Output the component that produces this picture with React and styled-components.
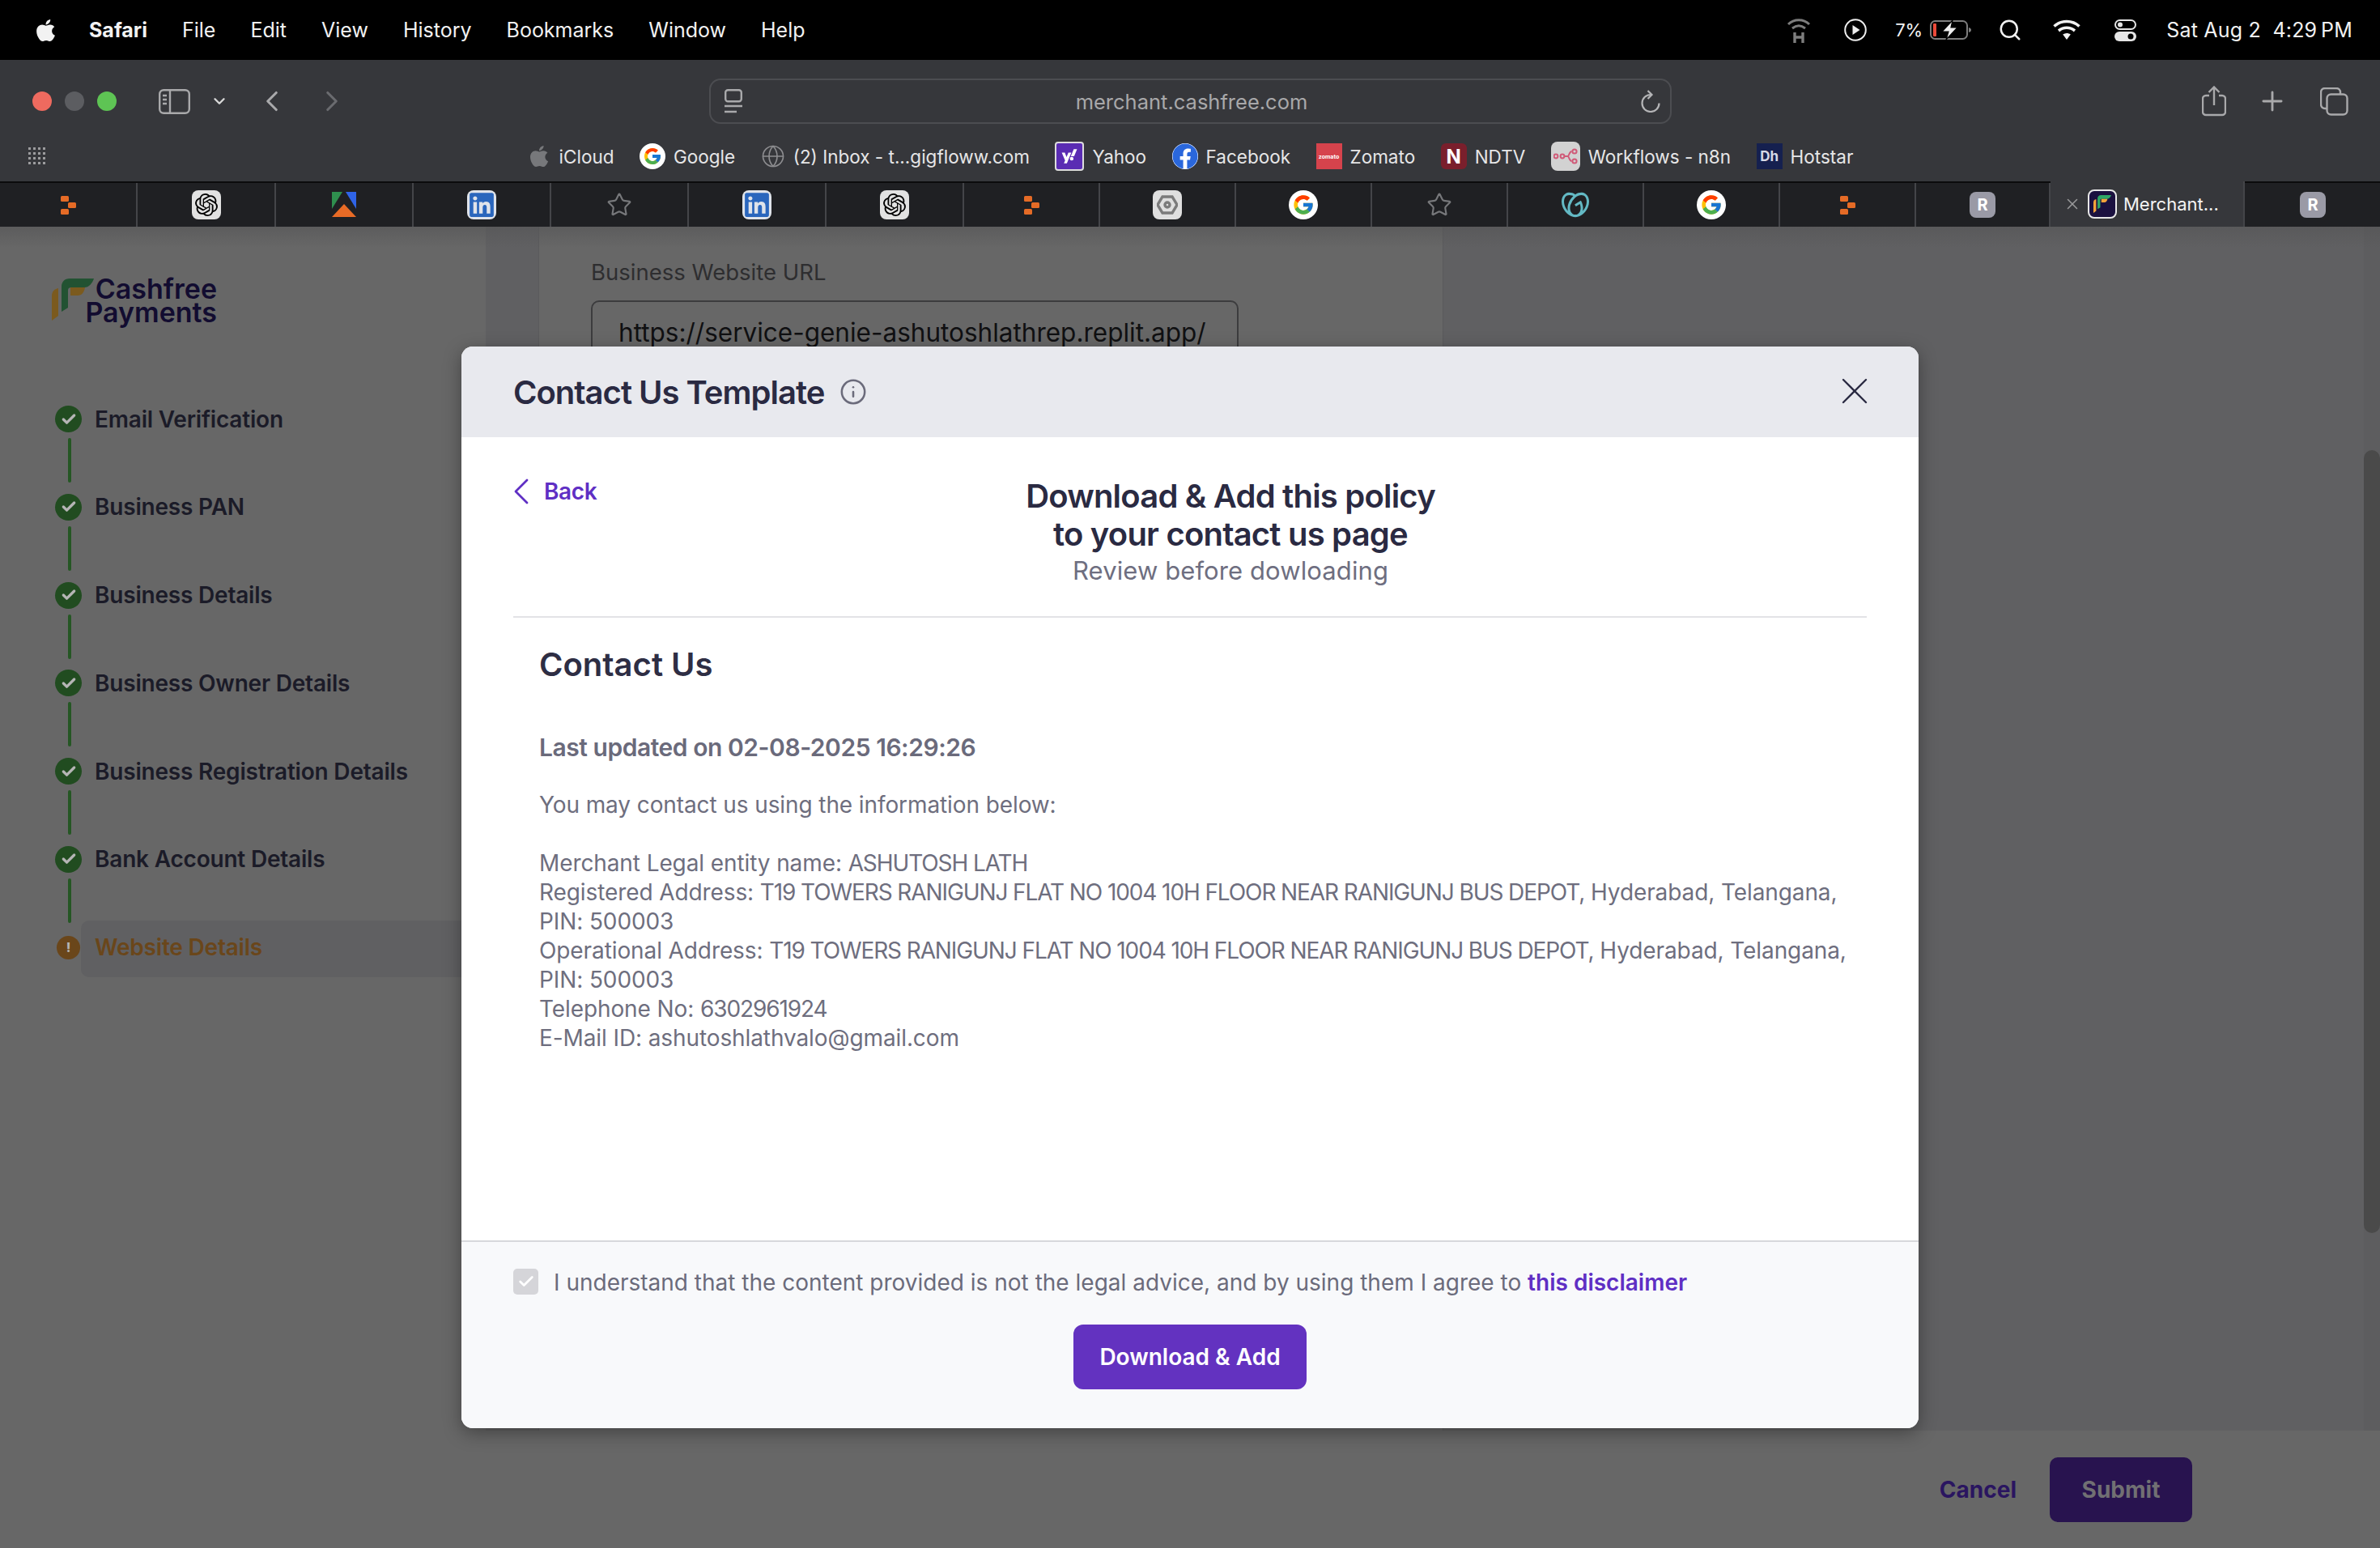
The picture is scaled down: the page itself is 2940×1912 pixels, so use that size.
import React from "react";
import styled, { createGlobalStyle } from "styled-components";
import { FaApple, FaYahoo, FaFacebook, FaLinkedin } from "react-icons/fa";
import { FcGoogle } from "react-icons/fc";
import { SiOpenai, SiGodaddy } from "react-icons/si";
import { Star, Globe, Search, Plus, ChevronLeft, ChevronRight, ChevronDown, X, Info, Check } from "lucide-react";

const UI = `"Inter", "Liberation Sans", sans-serif`;

const GlobalStyle = createGlobalStyle`
  html, body { margin: 0; padding: 0; background: #666; }
  * { box-sizing: border-box; }
`;

const Screen = styled.div`
  position: relative;
  display: flex;
  flex-direction: column;
  width: 2940px;
  height: 1912px;
  overflow: hidden;
  font-family: ${UI};
`;

/* mac menu bar */
const MenuBar = styled.div`
  display: flex;
  align-items: center;
  height: 74px;
  flex: none;
  padding: 0 34px 0 41px;
  background: #000;
  color: #f2f2f2;
  font-size: 25px;
`;
const MenuItem = styled.span`
  margin-left: ${(p) => p.$gap || 43}px;
  font-weight: ${(p) => (p.$bold ? 700 : 400)};
`;
const StatusArea = styled.div`
  display: flex;
  align-items: center;
  margin-left: auto;
`;
const StatusSlot = styled.span`
  display: flex;
  align-items: center;
  margin-left: ${(p) => p.$gap}px;
  font-size: ${(p) => p.$size || 25}px;
  letter-spacing: ${(p) => p.$track || 0}px;
  white-space: pre;
`;

/* safari toolbar */
const Toolbar = styled.div`
  flex: none;
  height: 150px;
  background: #36373b;
  color: #a9a9ab;
`;
const ToolRow = styled.div`
  display: flex;
  align-items: center;
  height: 102px;
  padding: 0 39px 0 40px;
`;
const Light = styled.span`
  width: 24px;
  height: 24px;
  margin-right: 16px;
  border-radius: 50%;
  background: ${(p) => p.$color};
`;
const ToolIcon = styled.span`
  display: flex;
  align-items: center;
  margin-left: ${(p) => p.$gap}px;
  color: ${(p) => p.$color || "#a9a9ab"};
`;
const AddressBar = styled.div`
  display: flex;
  align-items: center;
  justify-content: space-between;
  width: 1189px;
  height: 56px;
  margin-left: 445px;
  padding: 0 12px 0 17px;
  border: 2px solid #4c4d51;
  border-radius: 14px;
`;
const AddressText = styled.span`
  font-size: 25.5px;
  color: #a8a8aa;
`;
const RightTools = styled.div`
  display: flex;
  align-items: center;
  margin-left: auto;
`;
const Bookmarks = styled.div`
  position: relative;
  display: flex;
  align-items: center;
  justify-content: center;
  gap: 31.5px;
  height: 48px;
  margin-top: -7px;
`;
const GridIcon = styled.span`
  position: absolute;
  left: 35px;
  top: 13px;
  display: grid;
  grid-template-columns: repeat(4, 3px);
  grid-auto-rows: 3px;
  gap: 3px;
  i { display: block; background: #9c9c9e; }
`;
const Bookmark = styled.div`
  display: flex;
  align-items: center;
  gap: 10px;
  font-size: 22.5px;
  color: #e6e6e7;
`;
const Tile = styled.span`
  display: flex;
  align-items: center;
  justify-content: center;
  flex: none;
  width: ${(p) => p.$size || 36}px;
  height: ${(p) => p.$size || 36}px;
  border-radius: ${(p) => (p.$round ? "50%" : `${p.$radius ?? 8}px`)};
  border: ${(p) => p.$border || "none"};
  background: ${(p) => p.$bg || "transparent"};
  color: ${(p) => p.$color || "#000"};
  font-weight: 700;
  font-size: ${(p) => p.$font || 20}px;
`;
const FacebookGlyph = styled(FaFacebook)`
  border-radius: 50%;
  background: #fff;
`;

/* tabs */
const TabStrip = styled.div`
  display: flex;
  flex: none;
  height: 56px;
  background: #1f2023;
  border-top: 2px solid #0b0b0c;
`;
const Tab = styled.div`
  display: flex;
  align-items: center;
  justify-content: center;
  flex: none;
  width: ${(p) => p.$w}px;
  border-right: ${(p) => (p.$last ? "none" : "2px solid #444549")};
`;
const ActiveTab = styled.div`
  display: flex;
  align-items: center;
  flex: none;
  gap: 8px;
  width: 240px;
  margin-top: -2px;
  padding-left: 16px;
  background: #36373b;
  border-right: 2px solid #444549;
  font-size: 22px;
  color: #f4f4f4;
`;

/* page behind the modal */
const Page = styled.div`
  position: relative;
  display: flex;
  flex: 1;
  min-height: 0;
  background: #676767;
  &::before {
    content: "";
    position: absolute;
    inset: 0 0 auto 0;
    height: 26px;
    background: linear-gradient(#55555699, #67676700);
    z-index: 2;
  }
`;
const Sidebar = styled.aside`
  flex: none;
  width: 600px;
  padding: 64px 0 0 64px;
  background: #676767;
`;
const Logo = styled.div`
  display: flex;
  align-items: flex-start;
  height: 62px;
  margin-bottom: 95px;
`;
const LogoText = styled.div`
  width: 164px;
  margin: -2px 0 0 -12px;
  text-align: right;
  font-size: 34px;
  font-weight: 600;
  line-height: 29px;
  color: #120c30;
`;
const Steps = styled.div`
  display: flex;
  flex-direction: column;
  margin-left: 4px;
`;
const Step = styled.div`
  position: relative;
  display: flex;
  align-items: center;
  gap: 16px;
  height: 33px;
  margin-bottom: ${(p) => (p.$last ? 0 : 75.8)}px;
  font-size: 28px;
  font-weight: 600;
  letter-spacing: -0.2px;
  color: ${(p) => (p.$warn ? "#6a461a" : "#1b1b28")};
  &::after {
    content: ${(p) => (p.$last ? "none" : '""')};
    position: absolute;
    left: 16px;
    top: 40px;
    width: 4px;
    height: 55px;
    border-radius: 2px;
    background: #255724;
  }
`;
const StepHighlight = styled.div`
  position: absolute;
  left: 32px;
  top: -17px;
  width: 520px;
  height: 70px;
  border-radius: 10px 0 0 10px;
  background: #606062;
`;
const StepDot = styled.span`
  position: relative;
  display: flex;
  align-items: center;
  justify-content: center;
  flex: none;
  width: 33px;
  height: 33px;
  border-radius: 50%;
  background: ${(p) => (p.$warn ? "#6a461a" : "#214c20")};
  color: #b5b5b5;
  font-size: 18px;
  font-weight: 800;
  transform: scale(${(p) => (p.$warn ? 0.88 : 1)});
`;
const StepLabel = styled.span`
  position: relative;
`;
const RightColumn = styled.div`
  display: flex;
  flex-direction: column;
  flex: 1;
  min-width: 0;
`;
const ScrollRow = styled.div`
  display: flex;
  flex: 1;
  min-height: 0;
  background: #606062;
`;
const MainArea = styled.div`
  flex: 1;
  padding-left: 65px;
`;
const FormCard = styled.div`
  width: 1118px;
  height: 100%;
  padding: 40px 64px;
  background: #676767;
  border-left: 1px solid #5a5a5c;
  border-right: 1px solid #5a5a5c;
`;
const FieldLabel = styled.div`
  margin-bottom: 19px;
  font-size: 27.5px;
  line-height: 32px;
  color: #2e2e30;
`;
const FieldBox = styled.div`
  width: 800px;
  height: 90px;
  padding: 18px 32px;
  border: 2px solid #3c3c3e;
  border-radius: 10px;
  font-size: 31.5px;
  color: #101012;
  white-space: nowrap;
`;
const ScrollTrack = styled.div`
  flex: none;
  width: 20px;
  padding-top: 276px;
  background: #5d5d5f;
`;
const ScrollThumb = styled.div`
  height: 967px;
  border-radius: 10px;
  background: #4a4a4a;
`;
const BottomBar = styled.div`
  display: flex;
  align-items: flex-start;
  justify-content: flex-end;
  flex: none;
  gap: 41px;
  height: 145px;
  padding: 33px 232px 0 0;
  background: #676767;
`;
const CancelLink = styled.span`
  line-height: 80px;
  font-size: 28px;
  font-weight: 700;
  color: #2a1560;
`;
const SubmitButton = styled.span`
  width: 176px;
  height: 80px;
  border-radius: 10px;
  background: #28134f;
  text-align: center;
  line-height: 80px;
  font-size: 28px;
  font-weight: 700;
  color: #717073;
`;

/* modal */
const Modal = styled.div`
  position: absolute;
  left: 570px;
  top: 428px;
  display: flex;
  flex-direction: column;
  width: 1800px;
  height: 1336px;
  overflow: hidden;
  border-radius: 14px;
  background: #fff;
  box-shadow: 0 6px 22px rgba(0, 0, 0, 0.35);
  z-index: 5;
`;
const ModalHeader = styled.div`
  display: flex;
  align-items: center;
  flex: none;
  height: 112px;
  padding: 0 60px 0 64px;
  background: #e8e9ee;
`;
const ModalTitle = styled.h2`
  margin: 0 19px 0 0;
  font-size: 40px;
  font-weight: 600;
  letter-spacing: -1px;
  color: #2a2a42;
`;
const CloseIcon = styled(X)`
  margin: -2px -9px 0 auto;
`;
const ModalBody = styled.div`
  position: relative;
  flex: 1;
  padding: 0 64px;
`;
const BackLink = styled.div`
  position: absolute;
  left: 46px;
  top: 39px;
  display: flex;
  align-items: center;
  gap: 0;
  font-size: 28px;
  font-weight: 600;
  letter-spacing: -0.4px;
  color: #5f2fc4;
`;
const PolicyHead = styled.div`
  height: 223px;
  padding: 49px 0 0 100px;
  border-bottom: 2px solid #e3e3e6;
  text-align: center;
  color: #2a2a42;
`;
const PolicyTitle = styled.div`
  font-size: 40px;
  font-weight: 600;
  line-height: 47px;
  letter-spacing: -0.8px;
`;
const PolicySub = styled.div`
  font-size: 31px;
  line-height: 43px;
  letter-spacing: 0.1px;
  color: #6e6e80;
`;
const Policy = styled.div`
  padding: 34px 32px 0;
  color: #6e6e7e;
`;
const PolicyName = styled.h3`
  margin: 0 0 59px;
  font-size: 40px;
  line-height: 48px;
  font-weight: 600;
  color: #2e2e44;
`;
const PolicyUpdated = styled.div`
  margin-bottom: 34px;
  font-size: 30px;
  line-height: 38px;
  font-weight: 600;
  letter-spacing: -0.46px;
  color: #6a6a7b;
`;
const PolicyText = styled.div`
  font-size: 28px;
  line-height: 36px;
  letter-spacing: -0.1px;
  white-space: nowrap;
`;
const PolicyGap = styled.div`
  height: 36px;
`;
const Caps = styled.span`
  letter-spacing: -1.1px;
`;
const ModalFooter = styled.div`
  display: flex;
  flex-direction: column;
  align-items: center;
  flex: none;
  height: 232px;
  padding: 33px 64px 0;
  background: #f8f9fb;
  border-top: 2px solid #d7d8dc;
`;
const ConsentRow = styled.div`
  display: flex;
  align-items: center;
  align-self: stretch;
  gap: 19px;
  height: 32px;
  font-size: 28px;
  color: #6b6b7b;
`;
const ConsentBox = styled.span`
  display: flex;
  align-items: center;
  justify-content: center;
  width: 31px;
  height: 32px;
  border-radius: 5px;
  background: #d5d5d9;
  color: #fff;
`;
const ConsentText = styled.span`
  position: relative;
  top: 1px;
`;
const DisclaimerLink = styled.span`
  font-weight: 600;
  color: #5f2fc4;
`;
const PrimaryButton = styled.div`
  width: 288px;
  height: 80px;
  margin-top: 37px;
  border-radius: 12px;
  background: #6332c0;
  text-align: center;
  line-height: 80px;
  font-size: 28px;
  font-weight: 600;
  color: #fff;
`;

const OrangeMark = () => (
  <svg width="19" height="23" viewBox="0 0 19 23" fill="#e56b26">
    <rect x="0" y="0" width="10" height="7" rx="1.5" />
    <rect x="9" y="8" width="10" height="7" rx="1.5" />
    <rect x="0" y="16" width="10" height="7" rx="1.5" />
  </svg>
);

const ArrowMark = () => (
  <svg width="32" height="32" viewBox="0 0 32 32">
    <path d="M1 0h13L1 21z" fill="#2f8f4e" />
    <path d="M18 0h13v21z" fill="#2f64e8" />
    <path d="M16 15l15 16H1z" fill="#e86b26" />
  </svg>
);

const HexMark = () => (
  <svg width="26" height="24" viewBox="0 0 26 24" fill="none" stroke="#7b7b7b" strokeWidth="3.4">
    <path d="M7 2h12l6 10-6 10H7L1 12z" />
    <circle cx="13" cy="12" r="3" />
  </svg>
);

const N8nMark = () => (
  <svg width="30" height="20" viewBox="0 0 30 20" fill="none" stroke="#d05a78" strokeWidth="2">
    <circle cx="3" cy="10" r="2.4" />
    <circle cx="11" cy="10" r="2.4" />
    <path d="M13.5 10h4c2 0 2-6 5-6M17.5 10c2 0 2 6 5 6" />
    <circle cx="26" cy="4" r="2.6" />
    <circle cx="26" cy="16" r="2.6" />
  </svg>
);

const CashfreeMark = ({ size = 52, dim }) => (
  <svg width={size} height={size} viewBox="0 0 52 52">
    <path d="M12 10C12 4 16 0 22 0H52C50 6 46 11 40 11H24C22 11 20 12 20 14V36L12 41z" fill={dim ? "#225232" : "#2fa866"} />
    <path d="M23 11H41C40 17 37 21 32 21H23z" fill={dim ? "#7b5a1e" : "#f3a33a"} />
    <path d="M0 22C0 16 3 13 8 12V46L0 52z" fill={dim ? "#7b5a1e" : "#f3a33a"} />
  </svg>
);

const HotspotIcon = () => (
  <svg width="30" height="32" viewBox="0 0 30 32" fill="none" stroke="#7d7d7d" strokeWidth="3">
    <path d="M2 9C9 2 21 2 28 9M7 14c5-4 11-4 16 0" />
    <path d="M10 19v13M20 19v13M10 25h10" strokeWidth="3.4" />
  </svg>
);

const PlayIcon = () => (
  <svg width="28" height="28" viewBox="0 0 28 28">
    <circle cx="14" cy="14" r="12.8" fill="none" stroke="#eee" strokeWidth="2" />
    <path d="M10.5 8l9 6-9 6z" fill="#eee" />
  </svg>
);

const BatteryIcon = () => (
  <svg width="52" height="24" viewBox="0 0 52 24">
    <rect x="1" y="1" width="45" height="22" rx="5.5" fill="none" stroke="#7d7d7d" strokeWidth="2" />
    <rect x="4" y="4" width="4" height="16" rx="1" fill="#eb4a3a" />
    <path d="M48 9c2 .5 3 1.5 3 3s-1 2.5-3 3z" fill="#7d7d7d" />
    <path d="M28 0L15 14h8l-3 10 14-15h-8z" fill="#eee" stroke="#000" strokeWidth="1.2" />
  </svg>
);

const WifiIcon = () => (
  <svg width="34" height="26" viewBox="0 0 34 26" fill="none" stroke="#f2f2f2" strokeWidth="3.6">
    <path d="M1.5 8.5C10 .5 24 .5 32.5 8.5M7 14c6-5 14-5 20 0" />
    <path d="M12.2 18.5c3-2 6.6-2 9.6 0L17 25z" fill="#f2f2f2" stroke="none" />
  </svg>
);

const ControlIcon = () => (
  <svg width="27" height="27" viewBox="0 0 27 27">
    <rect x="1" y="1" width="25" height="11" rx="5.5" fill="none" stroke="#e6e6e6" strokeWidth="2" />
    <circle cx="7" cy="6.5" r="3" fill="#e6e6e6" />
    <rect y="15" width="27" height="12" rx="6" fill="#e6e6e6" />
    <circle cx="20" cy="21" r="3.5" fill="#000" />
  </svg>
);

const SidebarIcon = () => (
  <svg width="39" height="31" viewBox="0 0 39 31" fill="none" stroke="#a9a9ab" strokeWidth="2.4">
    <rect x="1.2" y="1.2" width="36.6" height="28.6" rx="5" />
    <path d="M14 1.5v28" />
    <path d="M5 8h5M5 13h5M5 18h5" />
  </svg>
);

const ReaderIcon = () => (
  <svg width="22" height="30" viewBox="0 0 22 30" fill="none" stroke="#a9a9ab" strokeWidth="2.4">
    <rect x="1.2" y="1.2" width="19.6" height="14" rx="3" />
    <path d="M0 21h22M0 28h15" />
  </svg>
);

const ReloadIcon = () => (
  <svg width="24" height="28" viewBox="0 0 24 28" fill="none" stroke="#b5b5b7" strokeWidth="2.2">
    <path d="M12 6A10.5 10.5 0 1 0 22.5 16.5" />
    <path d="M8.5 1L13.5 6 8.5 11" />
  </svg>
);

const ShareIcon = () => (
  <svg width="30" height="38" viewBox="0 0 30 38" fill="none" stroke="#a9a9ab" strokeWidth="2.4">
    <path d="M9 12H5a4 4 0 0 0-4 4v16a4 4 0 0 0 4 4h20a4 4 0 0 0 4-4V16a4 4 0 0 0-4-4h-4" />
    <path d="M15 24V2M8.5 8L15 1.5 21.5 8" />
  </svg>
);

const TabsIcon = () => (
  <svg width="35" height="35" viewBox="0 0 35 35" fill="none" stroke="#a9a9ab" strokeWidth="2.4">
    <path d="M8 26H6a5 5 0 0 1-5-5V6a5 5 0 0 1 5-5h14a5 5 0 0 1 5 5v2" />
    <rect x="8.5" y="8.5" width="25" height="25" rx="5" />
  </svg>
);

const GoogleTile = ({ size = 36 }) => (
  <Tile $size={size} $round $bg="#fff">
    <FcGoogle size={size - 8} />
  </Tile>
);

const GptTile = () => (
  <Tile $bg="#e2e2e2">
    <SiOpenai size={28} />
  </Tile>
);

const LinkedinTile = () => (
  <Tile $bg="#dfe3ea">
    <FaLinkedin size={34} color="#2a66bd" />
  </Tile>
);

const StarIcon = () => <Star size={32} color="#77787b" strokeWidth={1.6} />;

const tabs = [
  { w: 170, icon: <OrangeMark /> },
  { w: 171, icon: <GptTile /> },
  { w: 170, icon: <ArrowMark /> },
  { w: 170, icon: <LinkedinTile /> },
  { w: 170, icon: <StarIcon /> },
  { w: 170, icon: <LinkedinTile /> },
  { w: 170, icon: <GptTile /> },
  { w: 168, icon: <OrangeMark /> },
  { w: 168, icon: <Tile $bg="#dfdfdf"><HexMark /></Tile> },
  { w: 168, icon: <GoogleTile /> },
  { w: 168, icon: <StarIcon /> },
  { w: 168, icon: <SiGodaddy size={34} color="#63b9c4" /> },
  { w: 168, icon: <GoogleTile /> },
  { w: 168, icon: <OrangeMark /> },
  { w: 166, icon: <Tile $size={32} $bg="#9a9aa6" $color="#fff">R</Tile> },
];

const bookmarks = [
  { label: "iCloud", icon: <FaApple size={30} color="#77787b" /> },
  { label: "Google", icon: <GoogleTile size={32} /> },
  { label: "(2) Inbox - t...gigfloww.com", icon: <Globe size={30} color="#8d8d90" strokeWidth={1.3} /> },
  { label: "Yahoo", icon: <Tile $size={36} $bg="#5a2cb3" $color="#fff" $radius={4} $border="2px solid #ddd"><FaYahoo size={20} /></Tile> },
  { label: "Facebook", icon: <Tile $size={32} $round $bg="#2a67dc"><FacebookGlyph size={32} color="#2a67dc" /></Tile> },
  { label: "Zomato", icon: <Tile $size={32} $radius={0} $bg="#d6434c" $color="#fff" $font={7}>zomato</Tile> },
  { label: "NDTV", icon: <Tile $size={32} $radius={6} $bg="#7a1f2c" $color="#fff" $font={24}>N</Tile> },
  { label: "Workflows - n8n", icon: <Tile $bg="#d2d2d2"><N8nMark /></Tile> },
  { label: "Hotstar", icon: <Tile $size={32} $radius={0} $bg="#15204f" $color="#d6d9e6" $font={17}>Dh</Tile> },
];

const steps = [
  "Email Verification",
  "Business PAN",
  "Business Details",
  "Business Owner Details",
  "Business Registration Details",
  "Bank Account Details",
];

const ADDRESS = "T19 TOWERS RANIGUNJ FLAT NO 1004 10H FLOOR NEAR RANIGUNJ BUS DEPOT,";

const App = () => (
  <Screen>
    <GlobalStyle />
    <MenuBar>
      <FaApple size={31} />
      <MenuItem $gap={38} $bold>Safari</MenuItem>
      <MenuItem>File</MenuItem>
      <MenuItem>Edit</MenuItem>
      <MenuItem>View</MenuItem>
      <MenuItem>History</MenuItem>
      <MenuItem>Bookmarks</MenuItem>
      <MenuItem>Window</MenuItem>
      <MenuItem>Help</MenuItem>
      <StatusArea>
        <HotspotIcon />
        <StatusSlot $gap={41}><PlayIcon /></StatusSlot>
        <StatusSlot $gap={35} $size={22}>7%</StatusSlot>
        <StatusSlot $gap={9}><BatteryIcon /></StatusSlot>
        <StatusSlot $gap={32}><Search size={30} strokeWidth={2} /></StatusSlot>
        <StatusSlot $gap={38}><WifiIcon /></StatusSlot>
        <StatusSlot $gap={42}><ControlIcon /></StatusSlot>
        <StatusSlot $gap={37} $track={0.2}>{"Sat Aug 2  4:29\u2009PM"}</StatusSlot>
      </StatusArea>
    </MenuBar>

    <Toolbar>
      <ToolRow>
        <Light $color="#ee6a5f" />
        <Light $color="#5c5d61" />
        <Light $color="#5ec454" />
        <ToolIcon $gap={36}><SidebarIcon /></ToolIcon>
        <ToolIcon $gap={25}><ChevronDown size={22} strokeWidth={2.6} color="#d8d8d8" /></ToolIcon>
        <ToolIcon $gap={33}><ChevronLeft size={42} strokeWidth={1.8} /></ToolIcon>
        <ToolIcon $gap={32} $color="#6a6b6f"><ChevronRight size={42} strokeWidth={1.8} /></ToolIcon>
        <AddressBar>
          <ReaderIcon />
          <AddressText>merchant.cashfree.com</AddressText>
          <ReloadIcon />
        </AddressBar>
        <RightTools>
          <ShareIcon />
          <ToolIcon $gap={38}><Plus size={38} strokeWidth={1.8} /></ToolIcon>
          <ToolIcon $gap={40}><TabsIcon /></ToolIcon>
        </RightTools>
      </ToolRow>
      <Bookmarks>
        <GridIcon>{Array.from({ length: 16 }, (_, i) => <i key={i} />)}</GridIcon>
        {bookmarks.map((b) => (
          <Bookmark key={b.label}>{b.icon}<span>{b.label}</span></Bookmark>
        ))}
      </Bookmarks>
    </Toolbar>

    <TabStrip>
      {tabs.map((t, i) => (
        <Tab key={i} $w={t.w}>{t.icon}</Tab>
      ))}
      <ActiveTab>
        <X size={22} color="#9a9a9c" strokeWidth={1.6} />
        <Tile $bg="#1b1140" $border="2px solid #e8e8e8"><CashfreeMark size={22} /></Tile>
        <span>Merchant...</span>
      </ActiveTab>
      <Tab $w={168} $last>
        <Tile $size={32} $bg="#9a9aa6" $color="#fff">R</Tile>
      </Tab>
    </TabStrip>

    <Page>
      <Sidebar>
        <Logo>
          <CashfreeMark dim />
          <LogoText>Cashfree<br />Payments</LogoText>
        </Logo>
        <Steps>
          {steps.map((s) => (
            <Step key={s}>
              <StepDot><Check size={20} strokeWidth={4} /></StepDot>
              <StepLabel>{s}</StepLabel>
            </Step>
          ))}
          <Step $warn $last>
            <StepHighlight />
            <StepDot $warn>!</StepDot>
            <StepLabel>Website Details</StepLabel>
          </Step>
        </Steps>
      </Sidebar>
      <RightColumn>
        <ScrollRow>
          <MainArea>
            <FormCard>
              <FieldLabel>Business Website URL</FieldLabel>
              <FieldBox>https://service-genie-ashutoshlathrep.replit.app/</FieldBox>
            </FormCard>
          </MainArea>
          <ScrollTrack><ScrollThumb /></ScrollTrack>
        </ScrollRow>
        <BottomBar>
          <CancelLink>Cancel</CancelLink>
          <SubmitButton>Submit</SubmitButton>
        </BottomBar>
      </RightColumn>
    </Page>

    <Modal>
      <ModalHeader>
        <ModalTitle>Contact Us Template</ModalTitle>
        <Info size={34} color="#6b6b7b" strokeWidth={1.8} />
        <CloseIcon size={56} color="#2a2a42" strokeWidth={1} />
      </ModalHeader>
      <ModalBody>
        <BackLink>
          <ChevronLeft size={56} strokeWidth={1.2} />
          Back
        </BackLink>
        <PolicyHead>
          <PolicyTitle>Download &amp; Add this policy<br />to your contact us page</PolicyTitle>
          <PolicySub>Review before dowloading</PolicySub>
        </PolicyHead>
        <Policy>
          <PolicyName>Contact Us</PolicyName>
          <PolicyUpdated>Last updated on 02-08-2025 16:29:26</PolicyUpdated>
          <PolicyText>
            You may contact us using the information below:
            <PolicyGap />
            Merchant Legal entity name: <Caps>ASHUTOSH LATH</Caps><br />
            Registered Address: <Caps>{ADDRESS}</Caps> Hyderabad, Telangana,<br />
            PIN: 500003<br />
            Operational Address: <Caps>{ADDRESS}</Caps> Hyderabad, Telangana,<br />
            PIN: 500003<br />
            Telephone No: <Caps>6302961924</Caps><br />
            E-Mail ID: ashutoshlathvalo@gmail.com
          </PolicyText>
        </Policy>
      </ModalBody>
      <ModalFooter>
        <ConsentRow>
          <ConsentBox><Check size={22} strokeWidth={3} /></ConsentBox>
          <ConsentText>I understand that the content provided is not the legal advice, and by using them I agree to <DisclaimerLink>this disclaimer</DisclaimerLink></ConsentText>
        </ConsentRow>
        <PrimaryButton>Download &amp; Add</PrimaryButton>
      </ModalFooter>
    </Modal>
  </Screen>
);

export default App;
